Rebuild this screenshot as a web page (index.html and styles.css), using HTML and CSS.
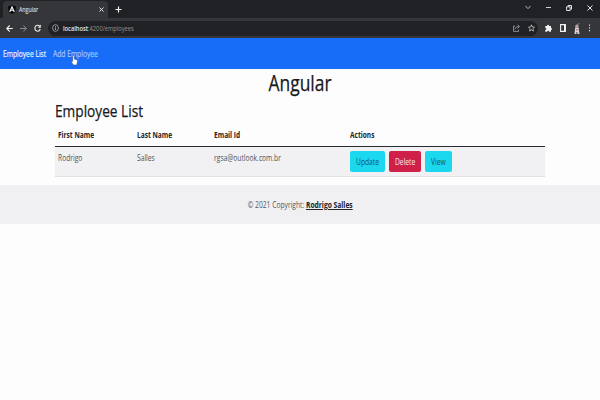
FILE: index.html
```html
<!DOCTYPE html>
<html lang="en">
<head>
<meta charset="utf-8">
<title>Angular</title>
<link rel="stylesheet" href="styles.css">
</head>
<body>
<header class="tabs">
  <div class="tab">
    <svg class="logo" width="8" height="9" viewBox="0 0 8 9"><path d="M4 0 8 1.5 7.3 7.2 4 9 .7 7.2 0 1.5Z" fill="#090a0c"/><path d="M1.7 7 4 1.8 6.3 7M2.7 5.3h2.6" fill="none" stroke="#fff" stroke-width="1.1"/></svg>
    <span class="tab-title squeeze">Angular</span>
    <svg class="tab-close" width="5" height="5" viewBox="0 0 5 5"><path d="m.5.5 4 4m0-4-4 4" stroke="#e4e5e7"/></svg>
  </div>
  <svg class="plus" width="7" height="7" viewBox="0 0 7 7"><path d="M3.5.5v6M.5 3.5h6" stroke="#f2f2f2" stroke-width="1.2"/></svg>
  <div class="window-controls">
    <svg width="6" height="5" viewBox="0 0 6 5"><path d="m.5 1 2.5 2.7L5.5 1" fill="none" stroke="#b5b5b7"/></svg>
    <svg width="5" height="5" viewBox="0 0 5 5"><path d="M0 2.5h5" stroke="#d4d4d6"/></svg>
    <svg width="6" height="6" viewBox="0 0 6 6"><path d="M.6 1.8h3.5v3.7H.6ZM2 1.6V.5h3.5v3.7H4.3" fill="none" stroke="#e2e2e4"/></svg>
    <svg width="6" height="6" viewBox="0 0 6 6"><path d="m.5.5 5 5m0-5-5 5" stroke="#e2e2e4"/></svg>
  </div>
</header>
<div class="toolbar">
  <div class="history">
    <svg width="7" height="7" viewBox="0 0 7 7"><path d="M6.8 3.5H.8M3.7.5l-3 3 3 3" fill="none" stroke="#f0f0f1" stroke-width="1.1"/></svg>
    <svg width="7" height="7" viewBox="0 0 7 7"><path d="M.2 3.5h6M3.3.5l3 3-3 3" fill="none" stroke="#8a8b8e"/></svg>
    <svg width="7" height="8" viewBox="0 0 7 8"><path d="M5.7 2.3A2.7 3 0 1 0 6.2 5" fill="none" stroke="#eee" stroke-width="1.1"/><path d="M6.8.5v3.2H3.8Z" fill="#eee"/></svg>
  </div>
  <div class="address">
    <svg width="7" height="8" viewBox="0 0 7 8"><ellipse cx="3.5" cy="4" rx="2.9" ry="3.4" fill="none" stroke="#a9aaad" stroke-width=".8"/><path d="M3.5 3.6v2.2M3.5 2v.9" stroke="#b5b6b8" stroke-width=".9"/></svg>
    <span class="url squeeze"><b>localhost</b>:4200/employees</span>
    <svg class="share" width="7" height="8" viewBox="0 0 7 8"><path d="M2.2 2H.5v5.4h5V5.7M2 5.4C2.2 3.5 3.5 2.6 6 2.6M4.6.8l1.9 1.8-1.9 1.8" fill="none" stroke="#a4a5a8" stroke-width=".8"/></svg>
    <svg width="7" height="8" viewBox="0 0 7 8"><path d="m3.5.8.8 2.1 2.2.2-1.6 1.6.5 2.4-1.9-1.3-1.9 1.3.5-2.4L.5 3.1l2.2-.2Z" fill="none" stroke="#c9cacc" stroke-width=".8"/></svg>
  </div>
  <div class="extensions">
    <svg width="7" height="8" viewBox="0 0 7 8"><path d="M.3 2h1.8a1 1.3 0 1 1 2 0H6v2a1 1 0 1 1 0 2v1.8H4.2a1 1 0 0 0-2 0H.3V5.9a1 1 0 0 0 0-2Z" fill="#f2f2f2"/></svg>
    <svg width="6" height="8" viewBox="0 0 6 8"><path d="M.6.6h4.8v6.8H.6Z" fill="none" stroke="#f2f2f2" stroke-width="1.1"/><path d="M4 1h1.5v6H4Z" fill="#f2f2f2"/></svg>
    <svg width="6" height="11" viewBox="0 0 6 11"><path d="M1.2 4.4h3.4L5.5 11H.5Z" fill="#d9d4d8"/><circle cx="2.9" cy="3.2" r="1.6" fill="#b9a3a3"/><path d="m3.5 1.5 1.8-1" stroke="#999"/><path d="M2 6h2v1.4H2Z" fill="#ce7189"/><path d="M2.9 9v2" stroke="#46404a"/></svg>
    <svg width="3" height="8" viewBox="0 0 3 8"><path d="M1 .5h1.1v1.2H1zm0 2.8h1.1v1.2H1zm0 2.8h1.1v1.2H1z" fill="#e5e5e5"/></svg>
  </div>
</div>
<nav class="navbar">
  <a class="nav-current"><span class="squeeze">Employee List</span></a>
  <a class="nav-add"><span class="squeeze">Add Employee</span>
    <svg class="pointer" width="7" height="11" viewBox="0 0 7 11"><path d="M1.7 6.2V1.1q.9-1 1.6 0v3l2.7.7q.7.4.5 1.5L5.8 10H2.3L.4 7q0-1 1.3-.8Z" fill="#fff" stroke="#31436a" stroke-width=".5"/></svg></a>
</nav>
<main>
  <h1><span class="squeeze">Angular</span></h1>
  <section class="container">
    <h2><span class="squeeze">Employee List</span></h2>
    <table>
      <colgroup><col class="c-first"><col class="c-last"><col class="c-email"><col></colgroup>
      <thead>
        <tr>
          <th><span class="squeeze">First Name</span></th>
          <th><span class="squeeze">Last Name</span></th>
          <th><span class="squeeze">Email Id</span></th>
          <th><span class="squeeze">Actions</span></th>
        </tr>
      </thead>
      <tbody>
        <tr>
          <td><span class="squeeze">Rodrigo</span></td>
          <td><span class="squeeze">Salles</span></td>
          <td><span class="squeeze">rgsa@outlook.com.br</span></td>
          <td>
            <div class="actions">
              <button class="update"><span class="squeeze">Update</span></button>
              <button class="delete"><span class="squeeze">Delete</span></button>
              <button class="view"><span class="squeeze">View</span></button>
            </div>
          </td>
        </tr>
      </tbody>
    </table>
  </section>
</main>
<footer><span class="squeeze">© 2021 Copyright: <a>Rodrigo Salles</a></span></footer>
</body>
</html>
```
FILE: styles.css
```css
* { box-sizing: border-box; }
body {
  margin: 0;
  height: 400px;
  overflow: hidden;
  background: #fefdfe;
  color: #212529;
  font: 8.6px/12px "Open Sans", "Noto Sans", sans-serif;
}
svg { display: block; flex: none; }
.squeeze {
  display: inline-block;
  white-space: nowrap;
  transform: scaleX(.78);
  transform-origin: left center;
}
.tabs { display: flex; align-items: center; height: 18px; background: #1f2125; }
.tab {
  display: flex;
  align-items: center;
  width: 105px;
  height: 17px;
  margin: 1px 0 0 3px;
  padding: 0 4px 0 5px;
  border-radius: 4px 4px 0 0;
  background: #35363a;
  color: #d5d6d8;
  font-size: 6.6px;
}
.tab-title { margin-left: 3px; transform: scaleX(.8); -webkit-text-stroke: .15px; }
.tab-close { margin-left: auto; }
.plus { margin-left: 7px; }
.window-controls { display: flex; align-items: center; gap: 15px; margin: -3px 7px 0 auto; }
.toolbar { display: flex; align-items: center; height: 20px; background: #35363a; }
.history { display: flex; align-items: center; gap: 7px; width: 48px; padding-left: 6px; }
.address {
  display: flex;
  align-items: center;
  gap: 8px;
  width: 490px;
  height: 15px;
  padding: 0 3px 0 4px;
  border-radius: 8px;
  background: #202124;
}
.url { margin-left: -4px; color: #929396; font-size: 7.4px; transform: scaleX(.775); }
.url b { color: #e4e4e6; font-weight: 600; }
.share { margin-left: auto; }
.extensions { display: flex; align-items: center; gap: 8px; padding-left: 7px; }
.navbar {
  display: flex;
  align-items: center;
  height: 31px;
  padding: 0 0 0 3px;
  background: #176df7;
  color: #f5f8ff;
  -webkit-text-stroke: .15px;
}
.nav-current { width: 50px; }
.nav-add { position: relative; color: #a9cbff; }
.pointer { position: absolute; left: 18px; top: 7px; }
h1, h2 { margin: 0; color: #15181c; font-weight: 400; -webkit-text-stroke: .25px; }
h1 { height: 30px; font-size: 21px; line-height: 29px; text-align: center; }
h1 .squeeze { transform: scaleX(.83); }
h1 .squeeze, footer .squeeze { transform-origin: center; }
.container { width: 490px; margin: 0 auto; }
h2 { height: 26px; font-size: 17px; line-height: 23px; }
h2 .squeeze { transform: scaleX(.805); }
table { width: 100%; table-layout: fixed; border-collapse: separate; border-spacing: 0; }
.c-first { width: 79px; }
.c-last { width: 77px; }
.c-email { width: 136px; }
th { height: 22px; padding: 0 3px 2px; border-bottom: 1px solid #292b32; text-align: left; vertical-align: middle; font-weight: 700; }
th .squeeze { transform: scaleX(.765); }
td { height: 30px; padding: 4px 3px 0; border-bottom: 1px solid #e2e2e5; background: #f1f0f2; vertical-align: top; color: #50545a; }
td > .squeeze { margin-top: 1px; }
.actions { display: flex; gap: 4px; }
button {
  display: flex;
  align-items: center;
  height: 21px;
  padding: 0 0 0 6px;
  border: 0;
  border-radius: 2px;
  font: inherit;
}
.update { width: 35px; background: #1bd8ef; color: #10545e; }
.delete { width: 32px; background: #ce2048; color: #fbe6ec; }
.view { width: 27px; background: #1bd8ef; color: #10545e; }
footer {
  height: 39px;
  margin-top: 8px;
  background: #f0eff1;
  color: #55585d;
  line-height: 41px;
  text-align: center;
}
footer a { color: #212529; font-weight: 700; text-decoration: underline; }
```
